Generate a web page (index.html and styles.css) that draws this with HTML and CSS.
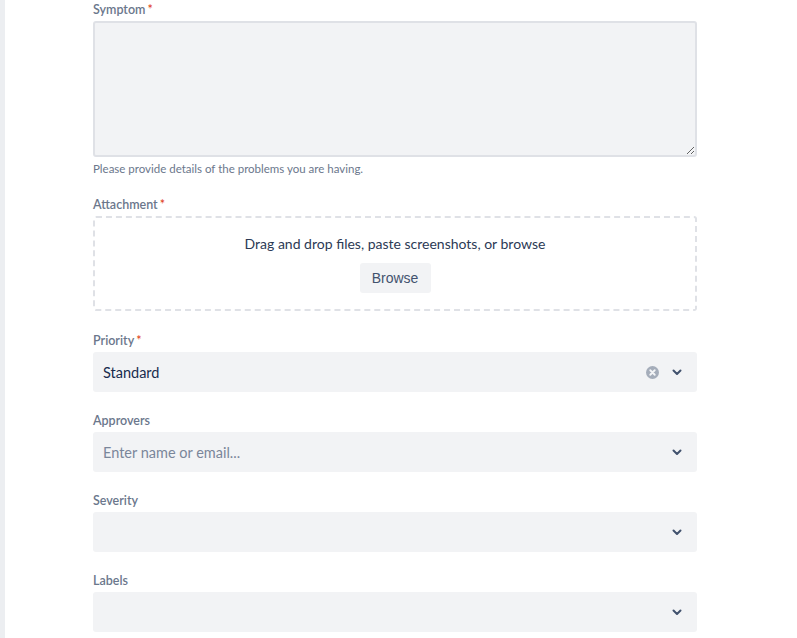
FILE: index.html
```html
<!DOCTYPE html>
<html lang="en">
<head>
  <meta charset="UTF-8">
  <title>Create request</title>
  <link rel="stylesheet" href="styles.css">
</head>
<body>

  <div class="rail"></div>

  <main class="page">
    <form class="form">

      <!-- Symptom -->
      <div class="field">
        <label class="label" for="symptom">Symptom<span class="req">*</span></label>
        <textarea id="symptom" class="textarea"></textarea>
        <div class="helper">Please provide details of the problems you are having.</div>
      </div>

      <!-- Attachment -->
      <div class="field">
        <div class="label">Attachment<span class="req">*</span></div>
        <div class="dropzone">
          <div class="drop-text">Drag and drop files, paste screenshots, or browse</div>
          <button type="button" class="browse">Browse</button>
        </div>
      </div>

      <!-- Priority -->
      <div class="field">
        <div class="label">Priority<span class="req">*</span></div>
        <div class="select">
          <span class="value">Standard</span>
          <span class="clear">
            <svg width="13" height="13" viewBox="0 0 14 14">
              <circle cx="7" cy="7" r="7" fill="#a5adba"/>
              <path d="M4.6 4.6l4.8 4.8M9.4 4.6l-4.8 4.8" stroke="#f4f5f7" stroke-width="2" stroke-linecap="round"/>
            </svg>
          </span>
          <span class="chevron">
            <svg width="10" height="7" viewBox="0 0 10 7"><path d="M1.5 1.5L5 5l3.5-3.5" fill="none" stroke="#42526e" stroke-width="2" stroke-linecap="round" stroke-linejoin="round"/></svg>
          </span>
        </div>
      </div>

      <!-- Approvers -->
      <div class="field">
        <div class="label">Approvers</div>
        <div class="select">
          <span class="value placeholder">Enter name or email...</span>
          <span class="chevron">
            <svg width="10" height="7" viewBox="0 0 10 7"><path d="M1.5 1.5L5 5l3.5-3.5" fill="none" stroke="#42526e" stroke-width="2" stroke-linecap="round" stroke-linejoin="round"/></svg>
          </span>
        </div>
      </div>

      <!-- Severity -->
      <div class="field">
        <div class="label">Severity</div>
        <div class="select">
          <span class="value"></span>
          <span class="chevron">
            <svg width="10" height="7" viewBox="0 0 10 7"><path d="M1.5 1.5L5 5l3.5-3.5" fill="none" stroke="#42526e" stroke-width="2" stroke-linecap="round" stroke-linejoin="round"/></svg>
          </span>
        </div>
      </div>

      <!-- Labels -->
      <div class="field">
        <div class="label">Labels</div>
        <div class="select">
          <span class="value"></span>
          <span class="chevron">
            <svg width="10" height="7" viewBox="0 0 10 7"><path d="M1.5 1.5L5 5l3.5-3.5" fill="none" stroke="#42526e" stroke-width="2" stroke-linecap="round" stroke-linejoin="round"/></svg>
          </span>
        </div>
      </div>

    </form>
  </main>

</body>
</html>
```

FILE: styles.css
```css
body {
  margin: 0;
  font-family: Lato, "Noto Sans", sans-serif;
  color: #172b4d;
  background: #fff;
  display: flex;
  height: 638px;
  overflow: hidden;
}

.rail {
  width: 5px;
  background: #eceef1;
  flex-shrink: 0;
}

.page {
  padding-left: 88px;
  padding-top: 2px;
}

.form {
  width: 604px;
}

.field + .field {
  margin-top: 21px;
}

.field:nth-child(3) {
  margin-top: 22px;
}

.label {
  display: block;
  font-size: 12.5px;
  font-weight: 600;
  line-height: 15px;
  color: #6b778c;
  margin-bottom: 4px;
}

.req {
  color: #de350b;
  margin-left: 2px;
  font-weight: 400;
}

.textarea {
  display: block;
  box-sizing: border-box;
  width: 100%;
  height: 136px;
  margin: 0;
  background: #f2f3f5;
  border: 2px solid #dfe1e6;
  border-radius: 3px;
  resize: vertical;
  font-family: inherit;
  font-size: 14px;
  outline: none;
}

.helper {
  margin-top: 6px;
  padding-bottom: 1px;
  font-size: 11.5px;
  line-height: 12px;
  color: #6b778c;
}

.dropzone {
  box-sizing: border-box;
  height: 95px;
  border: 2px dashed #dfe1e6;
  border-radius: 3px;
  padding-top: 16px;
  display: flex;
  flex-direction: column;
  align-items: center;
}

.drop-text {
  font-size: 14px;
  line-height: 20px;
  color: #2c3a55;
}

.browse {
  margin-top: 9px;
  height: 30px;
  width: 71px;
  border: none;
  border-radius: 3px;
  background: #f2f3f5;
  color: #42526e;
  font-family: "Liberation Sans", Arial, sans-serif;
  font-size: 14px;
  cursor: pointer;
}

.select {
  box-sizing: border-box;
  height: 40px;
  background: #f2f3f5;
  border-radius: 3px;
  display: flex;
  align-items: center;
  padding: 0 15px 0 10px;
}

.value {
  flex: 1;
  font-size: 14.5px;
  color: #172b4d;
}

.placeholder {
  color: #7a869a;
}

.clear {
  display: flex;
  margin-right: 13px;
}

.chevron {
  display: flex;
}
```
